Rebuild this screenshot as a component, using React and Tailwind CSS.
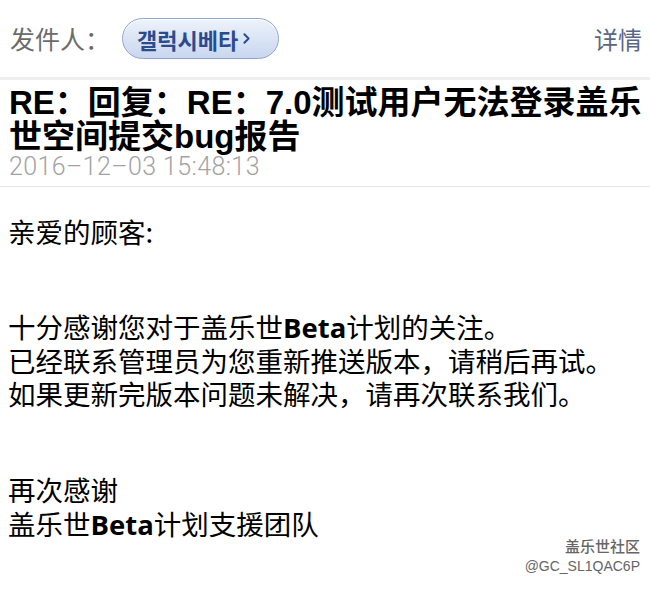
import { ChevronRight } from 'lucide-react';

const cjk = "font-['Noto_Sans_CJK_SC','Noto_Sans_CJK_KR',sans-serif]";

const MailHeader = () => (
  <div className="flex items-center h-[77px] pl-[10px] pr-[8px]">
    <span className="text-[25px] text-[#6b6b6b] leading-none">发件人：</span>
    {/* sender pill */}
    <div className="ml-[12px] flex items-center h-[41px] w-[157px] pl-[14px] rounded-full border-[1.5px] border-[#8ea6cf] bg-gradient-to-b from-[#eef3fb] to-[#c8d6ef] shadow-[inset_0_1px_0_#ffffff]">
      <span className="font-['Noto_Sans_CJK_KR',sans-serif] font-bold text-[22px] leading-none text-[#2c4b8e]">갤럭시베타</span>
      <ChevronRight className="w-[17px] h-[17px] text-[#2c4b8e]" strokeWidth={2.75} />
    </div>
    <span className="ml-auto text-[24px] leading-none text-[#5a6784]">详情</span>
  </div>
);

export default function App() {
  return (
    <div className={`relative w-[650px] h-[590px] overflow-hidden bg-white ${cjk}`}>
      <MailHeader />
      <div className="h-[3px] bg-[#eeeeee]" />

      {/* subject + date */}
      <div className="px-[9px] pt-[6px]">
        <h1 className="font-['Liberation_Sans','Noto_Sans_CJK_SC',sans-serif] text-[33px] font-bold leading-[34px] text-black whitespace-nowrap">
          RE：回复：RE：7.0测试用户无法登录盖乐<br />世空间提交bug报告
        </h1>
        <div className="text-[25px] leading-[24px] text-[#a3a3a3] mt-[1px] tracking-[0.4px] font-['Roboto',sans-serif] font-light">
          2016–12–03 15:48:13
        </div>
      </div>
      <div className="mt-[7px] h-px bg-[#e6e6e6]" />

      {/* body */}
      <div className="px-[8px] pt-[28px] text-[27.5px] text-black">
        <p className="leading-[33px]">亲爱的顾客:</p>
        <p className="leading-[33px] mt-[62px]">
          十分感谢您对于盖乐世<span className="font-bold font-['Open_Sans',sans-serif]">Beta</span>计划的关注。<br />
          已经联系管理员为您重新推送版本，请稍后再试。<br />
          如果更新完版本问题未解决，请再次联系我们。
        </p>
        <p className="leading-[34px] mt-[62px]">
          再次感谢<br />
          盖乐世<span className="font-bold font-['Open_Sans',sans-serif]">Beta</span>计划支援团队
        </p>
      </div>

      {/* watermark */}
      <div className="absolute right-[10px] top-[536px] flex flex-col items-end text-[15px] leading-[20px] text-[#666666] [text-shadow:0_0_2px_#ffffff]">
        <span className="font-medium">盖乐世社区</span>
        <span className="font-['Liberation_Sans',sans-serif] text-[14px]">@GC_SL1QAC6P</span>
      </div>
    </div>
  );
}
